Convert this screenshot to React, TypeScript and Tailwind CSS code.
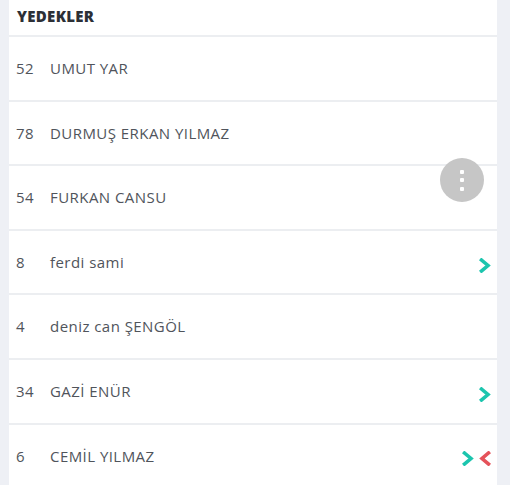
import React from "react";

const players = [
  {no: "52", name: "UMUT YAR", icons: []},
  {no: "78", name: "DURMUŞ ERKAN YILMAZ", icons: []},
  {no: "54", name: "FURKAN CANSU", icons: []},
  {no: "8", name: "ferdi sami", icons: ["in"]},
  {no: "4", name: "deniz can ŞENGÖL", icons: []},
  {no: "34", name: "GAZİ ENÜR", icons: ["in"]},
  {no: "6", name: "CEMİL YILMAZ", icons: ["in", "out"]},
];

function Chevron({dir}: {dir: "in" | "out"}) {
  // teal chevron points right (sub in), red points left (sub out)
  return (
    <svg width="12" height="15" viewBox="0 0 12 15" className={dir === "in" ? "text-[#1cc5ae]" : "text-[#e5525a]"}>
      <path d={dir === "in" ? "M2.5 2 L9 7.5 L2.5 13" : "M9.5 2 L3 7.5 L9.5 13"} fill="none" stroke="currentColor" strokeWidth="3.6" strokeLinecap="square" />
    </svg>
  );
}

export default function App() {
  return (
    <div className="relative h-[485px] w-[510px] overflow-hidden bg-[#eef0f5] pl-[9px] pr-[13px]" style={{fontFamily: '"Open Sans", sans-serif'}}>
      <div className="h-full bg-white">
        <div className="flex h-[37px] items-center border-b-2 border-[#eceef1] px-[8px] pb-[2px]">
          <span className="text-[15px] font-extrabold tracking-[0.3px] text-[#2c2f36]">YEDEKLER</span>
        </div>
        {players.map((p) => (
          <div key={p.no} className="flex h-[64.6px] items-center border-b-2 border-[#eceef1] pl-[7px] pr-[6px] text-[15px] tracking-[0.45px] text-[#50545b]">
            <span className="w-[34px]">{p.no}</span>
            <span className="flex-1">{p.name}</span>
            <div className="flex items-center gap-[5px] pt-[6px]">
              {p.icons.map((ic) => (
                <Chevron key={ic} dir={ic as "in" | "out"} />
              ))}
            </div>
          </div>
        ))}
      </div>
      <button className="absolute left-[440px] top-[158px] flex h-[44px] w-[44px] flex-col items-center justify-center gap-[4.5px] rounded-full bg-[#c6c6c6]">
        <span className="h-[4px] w-[4px] rounded-[1px] bg-white" />
        <span className="h-[4px] w-[4px] rounded-[1px] bg-white" />
        <span className="h-[4px] w-[4px] rounded-[1px] bg-white" />
      </button>
    </div>
  );
}
